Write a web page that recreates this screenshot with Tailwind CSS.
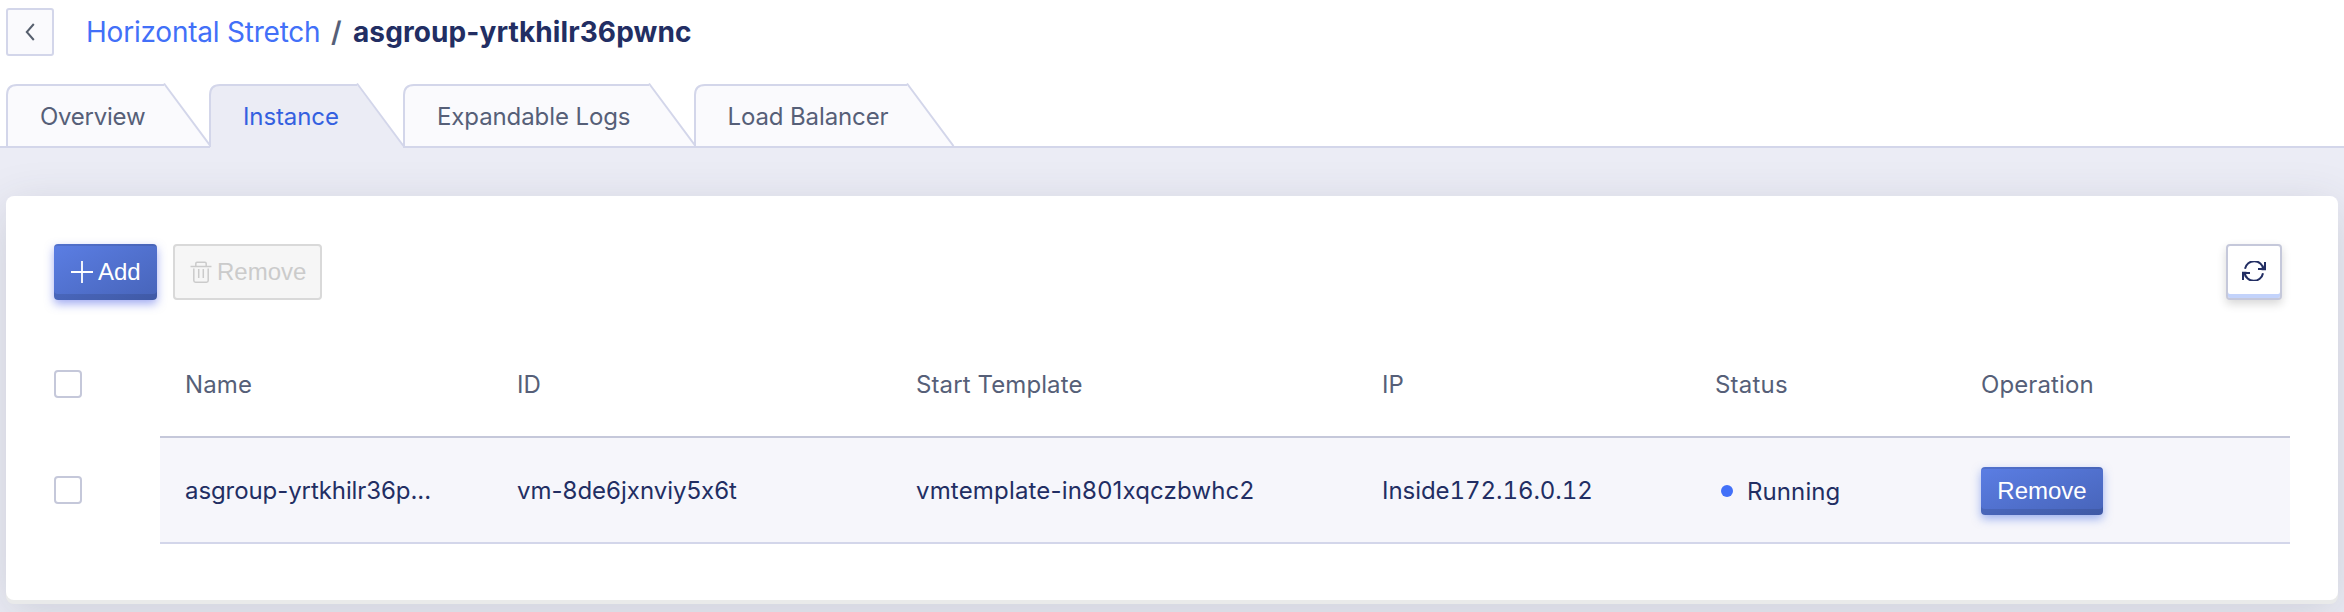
<!DOCTYPE html>
<html lang="en">
<head>
<meta charset="utf-8">
<title>Horizontal Stretch</title>
<script src="https://cdn.jsdelivr.net/npm/@tailwindcss/browser@4"></script>
</head>
<body class="flex h-[612px] w-[2344px] flex-col overflow-hidden bg-white font-['Inter','Liberation_Sans',sans-serif] text-[24px] leading-[32px] text-[#565f78] [font-feature-settings:'calt'_0]">

<header class="flex h-16 shrink-0 items-center pl-1.5 text-[28px] whitespace-nowrap">
  <button class="flex size-12 items-center justify-center rounded-[3px] border-2 border-[#d3d6ea] bg-[#fafafd]" aria-label="Back">
    <svg class="size-5" viewBox="0 0 20 20" fill="none" stroke="#565f6e" stroke-width="2"><path d="M13.8 2 L6.8 10 L13.8 18"/></svg>
  </button>
  <a class="ml-8 w-[245px] tracking-[-0.22px] text-[#4270f8]">Horizontal Stretch</a>
  <span class="w-[22px] font-semibold">/</span>
  <h1 class="font-bold tracking-[0.1px] text-[#222e63]">asgroup-yrtkhilr36pwnc</h1>
</header>

<nav class="flex h-[84px] shrink-0 items-end border-b-2 border-[#d3d6ea] pl-1.5 whitespace-nowrap">
  <a class="relative flex h-16 w-[203px] items-center pt-1.5 pl-[34px] tracking-[-0.25px]">
    <svg class="absolute top-0 left-0 h-16 w-[206px]" viewBox="0 0 206 64"><path d="M1 64V13Q1 3 11 3H158L204 64Z" fill="#fafafd"/><path d="M1 64V13Q1 3 11 3H158M158 1.5L204.5 64" fill="none" stroke="#d3d6ea" stroke-width="2"/></svg>
    <span class="relative">Overview</span>
  </a>
  <a class="relative flex h-16 w-[194px] items-center pt-1.5 pl-[34px] tracking-[-0.1px] text-[#3460e0]">
    <svg class="absolute top-0 left-0 h-[66px] w-[196px]" viewBox="0 0 196 66"><path d="M1 66V13Q1 3 11 3H148L194 64V66Z" fill="#ebecf5"/><path d="M1 65V13Q1 3 11 3H148M148 1.5L194.5 64" fill="none" stroke="#d3d6ea" stroke-width="2"/></svg>
    <span class="relative">Instance</span>
  </a>
  <a class="relative flex h-16 w-[291px] items-center pt-1.5 pl-[34px] tracking-[-0.1px]">
    <svg class="absolute top-0 left-0 h-16 w-[294px]" viewBox="0 0 294 64"><path d="M1 64V13Q1 3 11 3H246L292 64Z" fill="#fafafd"/><path d="M1 64V13Q1 3 11 3H246M246 1.5L292.5 64" fill="none" stroke="#d3d6ea" stroke-width="2"/></svg>
    <span class="relative">Expandable Logs</span>
  </a>
  <a class="relative flex h-16 w-[262px] items-center pt-1.5 pl-[33.5px] tracking-[-0.12px]">
    <svg class="absolute top-0 left-0 h-16 w-[262px]" viewBox="0 0 262 64"><path d="M1 64V13Q1 3 11 3H213L259 64Z" fill="#fafafd"/><path d="M1 64V13Q1 3 11 3H213M213 1.5L259.5 64" fill="none" stroke="#d3d6ea" stroke-width="2"/></svg>
    <span class="relative">Load Balancer</span>
  </a>
</nav>

<main class="h-[464px] shrink-0 overflow-hidden bg-[#ebecf5] px-1.5 pt-12">
  <section class="h-[404px] rounded-[8px] bg-white pt-12 pr-12 pl-12 shadow-[0_4px_0_0_#e9eaea,0_12px_48px_0_rgba(55,60,80,0.17)]">

    <div class="flex h-14 gap-4 font-['Liberation_Sans',Arial,sans-serif]">
      <button class="flex h-14 w-[103px] items-center rounded-[4px] border-t-2 border-black/10 bg-linear-to-br from-[#5b7ee4] to-[#4764b9] bg-origin-border pb-0.5 pl-[17px] text-white shadow-[inset_0_-6px_0_rgba(0,0,0,0.1),0_4px_10px_rgba(70,90,230,0.5)]">
        <svg class="size-[22px]" viewBox="0 0 22 22" stroke="white" stroke-width="1.8" fill="none"><path d="M0 11H22M11 0V22"/></svg>
        <span class="ml-[5px]">Add</span>
      </button>
      <button class="flex h-14 w-[149px] items-center rounded-[4px] border-2 border-[#d9d9d9] bg-[#f6f6f6] pl-[15px] text-[#cbcbcb]">
        <svg class="size-[22px]" viewBox="0 0 22 22" stroke="#cbcbcb" stroke-width="1.5" fill="none"><path d="M0.5 5.5H21.5M5.8 5.5V2.5Q5.8 1.3 7 1.3H15Q16.2 1.3 16.2 2.5V5.5M3.8 7.5V19.5Q3.8 21.2 5.5 21.2H16.5Q18.2 21.2 18.2 19.5V7.5M8.7 8V17M13.3 8V17"/></svg>
        <span class="ml-[5px]">Remove</span>
      </button>
      <button class="mr-2 ml-auto flex size-14 items-center justify-center rounded-[4px] border-2 border-[#c5c8da] bg-white pb-0.5 shadow-[inset_0_-4px_0_#c3d3fb,0_4px_10px_rgba(0,0,0,0.16)]" aria-label="Refresh">
        <svg class="h-[20px] w-[24px]" viewBox="0 0 24 20" fill="none" stroke="#222e63" stroke-width="2"><path d="M3 7.8A9.4 9.4 0 0 1 21.5 8M16 8H23V1M21 12.2A9.4 9.4 0 0 1 2.5 12M8 12H1V19"/><path d="M19.5 8H23V4.5M4.5 12H1V15.5" stroke-width="2.5"/></svg>
      </button>
    </div>

    <div class="mt-8 flex whitespace-nowrap">
      <div class="flex w-[106px] flex-col">
        <div class="flex h-[104px] items-center"><span class="size-7 rounded-[4px] border-2 border-[#c5c8da] bg-white"></span></div>
        <div class="mt-0.5 flex h-[104px] items-center"><span class="size-7 rounded-[4px] border-2 border-[#c5c8da] bg-white"></span></div>
      </div>
      <div class="w-[2130px] shrink-0">
        <div class="grid h-[106px] grid-cols-[332px_399px_466px_333px_266px_1fr] items-center border-b-2 border-[#c5c8da] pt-0.5 pl-[25px] tracking-[0.1px]">
          <span>Name</span><span>ID</span><span>Start Template</span><span>IP</span><span class="tracking-[0.2px]">Status</span><span>Operation</span>
        </div>
        <div class="grid h-[106px] grid-cols-[332px_399px_466px_333px_266px_1fr] items-center border-b-2 border-[#d3d6ea] bg-[#f6f6fb] pt-0.5 pl-[25px] text-[#222e63]">
          <span class="tracking-[-0.08px]">asgroup-yrtkhilr36p...</span>
          <span>vm-8de6jxnviy5x6t</span>
          <span class="tracking-[0.18px]">vmtemplate-in801xqczbwhc2</span>
          <span class="tracking-[-0.05px] [font-feature-settings:'calt'_0,'tnum'_1]">Inside172.16.0.12</span>
          <span class="flex items-center tracking-[0.1px]"><i class="mr-[14px] ml-[6px] size-3 rounded-full bg-[#4270f8]"></i><span class="pt-0.5">Running</span></span>
          <span><button class="flex h-12 w-[122px] items-center justify-center rounded-[4px] border-t-2 border-black/10 bg-linear-to-br from-[#5b7ee4] to-[#4764b9] bg-origin-border pb-0.5 font-['Liberation_Sans',Arial,sans-serif] text-white shadow-[inset_0_-6px_0_rgba(0,0,0,0.1),0_4px_10px_rgba(70,110,230,0.5)]">Remove</button></span>
        </div>
      </div>
    </div>
  </section>
</main>
</body>
</html>
